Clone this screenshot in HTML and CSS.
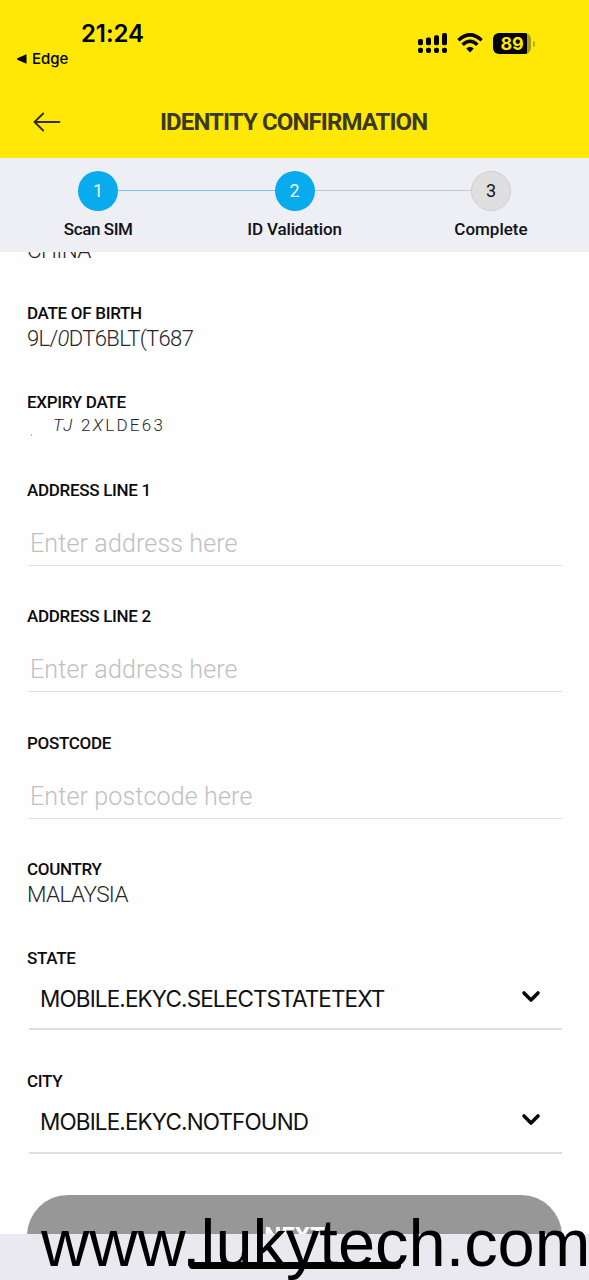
FILE: index.html
```html
<!DOCTYPE html>
<html lang="en">
<head>
<meta charset="utf-8">
<title>Identity Confirmation</title>
<link rel="stylesheet" href="styles.css">
</head>
<body>
<div class="screen">
  <header class="header">
    <div class="status">
      <div class="status-left">
        <div class="clock">21:24</div>
        <div class="back-app"><svg width="10" height="10" viewBox="0 0 10 10"><path d="M9.500 .3v9.400L.3 5.700Q-.2 5 .3 4.300z"/></svg><span>Edge</span></div>
      </div>
      <div class="status-right">
        <svg class="signal" width="30" height="21" viewBox="0 0 30 21">
          <rect x="0" y="6" width="5" height="6.200" rx="1.800"/><rect x="8" y="4.500" width="5" height="7.700" rx="1.800"/><rect x="16" y="2.300" width="5" height="9.900" rx="1.800"/><rect x="24" y="0" width="5" height="12.200" rx="1.800"/>
          <rect x="0" y="14.700" width="5" height="5.400" rx="2"/><rect x="8" y="14.700" width="5" height="5.400" rx="2"/><rect x="16" y="14.700" width="5" height="5.400" rx="2"/><rect x="24" y="14.700" width="5" height="5.400" rx="2"/>
        </svg>
        <svg class="wifi" width="26" height="20" viewBox="0 0 26 20">
          <path d="M1.400 7.200Q13-3.400 24.600 7.200M5.600 11.800Q13 4.800 20.400 11.800" fill="none" stroke="#000" stroke-width="3.400"/>
          <path d="M9.200 15.500Q13 12 16.800 15.500L13 19.400z"/>
        </svg>
        <div class="battery"><div class="battery-body">89</div><div class="battery-cap"></div></div>
      </div>
    </div>
    <div class="titlebar">
      <svg class="back" width="28" height="20" viewBox="0 0 28 20"><path d="M26.500 10H1.500M10.200 1.500L1.500 10l8.700 8.500"/></svg>
      <h1 class="title">IDENTITY CONFIRMATION</h1>
    </div>
  </header>

  <nav class="stepper">
    <div class="track">
      <div class="dot">1</div><div class="line line-done"></div><div class="dot">2</div><div class="line"></div><div class="dot dot-next">3</div>
    </div>
    <div class="captions"><span class="cap-scan">Scan SIM</span><span class="cap-id">ID Validation</span><span class="cap-done">Complete</span></div>
  </nav>

  <main class="form">
    <div class="field"><div class="value">CHINA</div></div>
    <div class="field"><div class="label">DATE OF BIRTH</div><div class="value scrawl">9L/<i>0</i>DT6BLT(T687</div></div>
    <div class="field"><div class="label">EXPIRY DATE</div><div class="value scrawl scrawl-short"><b class="speck"></b><span><i>TJ</i> 2<i>X</i>LDE63</span></div></div>
    <div class="field entry"><div class="label">ADDRESS LINE 1</div><div class="input">Enter address here</div></div>
    <div class="field entry"><div class="label">ADDRESS LINE 2</div><div class="input">Enter address here</div></div>
    <div class="field entry"><div class="label">POSTCODE</div><div class="input">Enter postcode here</div></div>
    <div class="field"><div class="label">COUNTRY</div><div class="value">MALAYSIA</div></div>
    <div class="field choice"><div class="label">STATE</div><div class="select"><span>MOBILE.EKYC.SELECTSTATETEXT</span><svg width="20" height="13" viewBox="0 0 20 13"><path d="M3 3l7 7 7-7"/></svg></div></div>
    <div class="field choice"><div class="label">CITY</div><div class="select"><span>MOBILE.EKYC.NOTFOUND</span><svg width="20" height="13" viewBox="0 0 20 13"><path d="M3 3l7 7 7-7"/></svg></div></div>
    <div class="next">NEXT</div>
  </main>
  <footer class="footer"><div class="home"></div></footer>
  <div class="watermark">www.lukytech.com</div>
</div>
</body>
</html>
```
FILE: styles.css
```css
* { box-sizing: border-box; }
body { margin: 0; background: #fff; font-family: Roboto, "Liberation Sans", sans-serif; }
.screen { position: relative; width: 589px; height: 1280px; overflow: hidden; display: flex; flex-direction: column; background: #fefefe; }
.header { height: 158px; flex: none; background: #ffe805; }
.status { height: 86px; display: flex; justify-content: space-between; padding: 19px 54px 0 17px; font-family: Inter, sans-serif; }
.clock { font-size: 24px; line-height: 30px; font-weight: 600; margin-left: 64px; letter-spacing: -.1px; }
.back-app { display: flex; align-items: center; gap: 5px; font-size: 15px; line-height: 20px; font-weight: 500; }
.status-right { display: flex; align-items: flex-start; padding-top: 14px; }
.wifi { margin-left: 9px; }
.battery { display: flex; align-items: center; gap: 2px; margin-left: 10px; }
.battery-body { width: 38px; height: 21px; border-radius: 6px; background: linear-gradient(90deg, #000 34px, #a99d10 34px); color: #ffe805; font-size: 18px; line-height: 21px; font-weight: 700; text-align: center; letter-spacing: -.3px; }
.battery-cap { width: 2px; height: 6px; border-radius: 0 2px 2px 0; background: #b8aa10; }
.titlebar { height: 72px; display: grid; grid-template-columns: 160px 1fr; align-items: center; }
.back { margin-left: 33px; fill: none; stroke: #302d20; stroke-width: 1.8; stroke-linecap: round; stroke-linejoin: round; }
.title { margin: 0; font-size: 24px; line-height: 30px; font-weight: 700; color: #3b3823; letter-spacing: -.9px; white-space: nowrap; }
.stepper { height: 93.5px; flex: none; background: #eeeff4; padding-top: 12.5px; z-index: 1; }
.track { display: flex; align-items: center; padding: 0 78px; }
.dot { width: 40px; height: 40px; border-radius: 50%; flex: none; background: #09abef; color: #e9f7ff; font-size: 18px; line-height: 40px; text-align: center; }
.dot-next { background: #dfdfdf; border: 1px solid #cdced4; color: #16161a; line-height: 38px; }
.line { height: 1.5px; flex: 1; background: #c0c6d5; }
.line-done { background: #7cc2e2; }
.captions { display: grid; grid-template-columns: repeat(3, 196.4px); text-align: center; font-size: 17px; line-height: 24px; font-weight: 500; color: #111116; padding-top: 6.5px; }
.cap-scan { letter-spacing: -.4px; }
.cap-id { letter-spacing: -.15px; }
.form { flex: 1; min-height: 0; overflow: hidden; padding: 0 27px; }
.field { margin-bottom: 38.5px; }
.field:first-child { margin-top: -14px; }
.label { font-size: 17px; line-height: 25px; height: 25px; font-weight: 500; color: #0c0c0e; white-space: nowrap; letter-spacing: -.3px; }
.value { font-size: 22.5px; line-height: 25px; height: 25px; font-weight: 300; color: #26262a; white-space: nowrap; letter-spacing: -.6px; }
.scrawl { font-size: 22px; letter-spacing: -.65px; }
.scrawl-short { display: flex; align-items: flex-start; font-size: 17px; line-height: 20px; letter-spacing: 2.3px; }
.speck { width: 1px; height: 2px; margin: 19px 21px 0 4px; background: #bbb; }
.entry { height: 87.9px; }
.input { height: 62.9px; margin-left: 2px; padding: 25px 0 0 1px; border-bottom: 1.5px solid #dedee0; color: #c0c0c0; font-size: 25px; line-height: 32px; font-weight: 300; white-space: nowrap; letter-spacing: .15px; }
.choice { height: 84.2px; margin-bottom: 39.6px; }
.select { height: 59.2px; margin-left: 2px; padding: 11px 21px 0 11px; border-bottom: 2px solid #dedee0; display: flex; justify-content: space-between; align-items: flex-start; font: 400 22.500px/34px Inter, sans-serif; letter-spacing: -.87px; color: #111; white-space: nowrap; }
.select svg { margin-top: 8px; fill: none; stroke: #080808; stroke-width: 3.6; stroke-linecap: round; stroke-linejoin: round; }
.next { margin-top: 41px; height: 82px; border-radius: 41px; background: #979797; color: #fff; text-align: center; font-size: 24px; line-height: 82px; font-weight: 700; }
.footer { flex: none; height: 46px; background: #e9e9ef; display: flex; justify-content: center; align-items: flex-start; padding-top: 28px; }
.home { width: 212px; height: 7px; border-radius: 4px; background: #000; }
.watermark { position: absolute; left: 41px; top: 1206px; font: 66.8px/74px "Liberation Sans", sans-serif; color: #000; white-space: nowrap; }
```
